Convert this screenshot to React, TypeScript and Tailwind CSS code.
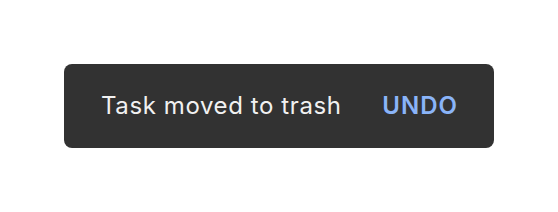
const App = () => {
    return (
        <div className="w-[558px] h-[212px] bg-white pt-16 font-['Inter','Liberation_Sans',sans-serif]">
            <div className="mx-auto w-[430px] h-[84px] rounded-lg bg-[#323232] pl-[37px] pr-9 flex items-center justify-between">
                <span className="text-[24px] tracking-[0.6px] text-[#f1f1f1]">Task moved to trash</span>
                <button className="text-[24px] font-semibold tracking-[1px] text-[#8ab4f8]">UNDO</button>
            </div>
        </div>
    );
};

export default App;
